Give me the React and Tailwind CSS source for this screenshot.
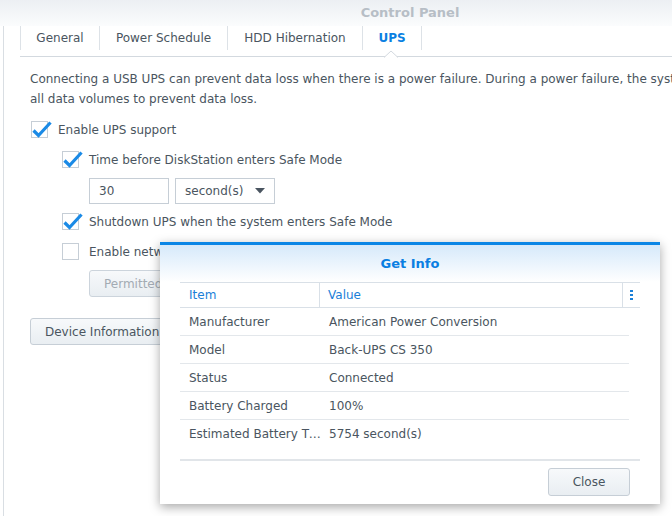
import React from "react";

function Check({ checked }) {
  return (
    <span className="relative block w-[17px] h-[17px] border border-[#c6ced6] bg-white shrink-0">
      {checked && (
        <svg className="absolute -left-[1px] -top-[4px]" width="22" height="22" viewBox="0 0 22 22">
          <path d="M2.5 12.5 L7.5 17.5 L19.5 4.5" fill="none" stroke="#1a8ae6" strokeWidth="3.2" strokeLinejoin="miter" />
        </svg>
      )}
    </span>
  );
}

function CheckRow({ checked, children, indent }) {
  return (
    <div className={`flex items-center h-[30px] ${indent ? "pl-[32px]" : "pl-[1px]"}`}>
      <Check checked={checked} />
      <span className="ml-[10px] pt-[1px] whitespace-nowrap">{children}</span>
    </div>
  );
}

const rows = [
  ["Manufacturer", "American Power Conversion"],
  ["Model", "Back-UPS CS 350"],
  ["Status", "Connected"],
  ["Battery Charged", "100%"],
  ["Estimated Battery Time", "5754 second(s)"],
];

export default function App() {
  return (
    <div className="relative w-[672px] h-[516px] overflow-hidden bg-white font-['DejaVu_Sans',sans-serif] text-[12px] text-[#4a5560]">
      {/* title bar */}
      <div className="h-[26px] w-[820px] bg-gradient-to-b from-[#eceff3] to-[#fbfcfd] flex items-center justify-center">
        <span className="font-bold text-[13px] text-[#b7bec6]">Control Panel</span>
      </div>

      <div className="ml-[3px] w-[814px] h-[490px] border-l border-[#d9dee3]">
        {/* tabs */}
        <div className="relative ml-[16px] h-[31px] border-b border-[#d3d9df] flex items-start">
          {[
            ["General", "w-[79px]"],
            ["Power Schedule", "w-[128px]"],
            ["HDD Hibernation", "w-[135px]"],
          ].map(([t, w]) => (
            <div key={t} className={`${w} h-[24px] border-l border-[#dde2e7] flex items-center justify-center whitespace-nowrap`}>
              {t}
            </div>
          ))}
          <div className="w-[60px] h-[24px] border-l border-r border-[#dde2e7] flex items-center justify-center font-bold text-[#0a7fe2]">
            UPS
          </div>
          <svg className="absolute left-[364px] top-[24px]" width="14" height="8" viewBox="0 0 14 8">
            <path d="M0 7.5 L7 1 L14 7.5" fill="white" stroke="#d3d9df" strokeWidth="1" />
            <rect x="1" y="7.2" width="12" height="1" fill="white" />
          </svg>
        </div>

        {/* content */}
        <div className="pl-[26px] pt-[12px]">
          <div className="leading-[20px] whitespace-nowrap">
            <div>Connecting a USB UPS can prevent data loss when there is a power failure. During a power failure, the system will unmount</div>
            <div>all data volumes to prevent data loss.</div>
          </div>

          <div className="mt-[5px]">
            <CheckRow checked>Enable UPS support</CheckRow>
            <CheckRow checked indent>Time before DiskStation enters Safe Mode</CheckRow>
            <div className="pl-[59px] mt-[4px] flex gap-[6px]">
              <div className="w-[80px] h-[26px] border border-[#c6ced6] flex items-center pl-[9px]">30</div>
              <div className="w-[100px] h-[26px] border border-[#c6ced6] flex items-center justify-between pl-[9px] pr-[9px]">
                <span>second(s)</span>
                <svg width="10" height="6" viewBox="0 0 10 6">
                  <path d="M0 0 L10 0 L5 5.5 Z" fill="#4a5560" />
                </svg>
              </div>
            </div>
            <div className="mt-[2px]">
              <CheckRow checked indent>Shutdown UPS when the system enters Safe Mode</CheckRow>
              <CheckRow indent>Enable network UPS server</CheckRow>
            </div>
            <div className="pl-[59px] mt-[4px]">
              <div className="inline-flex items-center h-[27px] px-[14px] rounded-[3px] border border-[#ccd4dc] bg-gradient-to-b from-[#f7f9fb] to-[#e9eef2] text-[#a3abb3] whitespace-nowrap">
                Permitted DiskStation Devices
              </div>
            </div>
            <div className="mt-[21px]">
              <div className="inline-flex items-center h-[27px] px-[14px] rounded-[3px] border border-[#c6ced6] bg-gradient-to-b from-[#f7f9fb] to-[#e9eef2] whitespace-nowrap">
                Device Information
              </div>
            </div>
          </div>
        </div>
      </div>

      {/* dialog */}
      <div className="absolute left-[160px] top-[242px] w-[500px] h-[262px] bg-white border-t-[3px] border-[#0b86e6] shadow-[0_3px_10px_rgba(0,0,0,0.35)] flex flex-col">
        <div className="h-[37px] shrink-0 bg-gradient-to-b from-[#d6e9fa] to-white flex items-center justify-center">
          <span className="font-bold text-[13px] text-[#0a7fe2]">Get Info</span>
        </div>
        <div className="mx-[20px]">
          <div className="flex h-[26px] border-t border-b border-[#d9e0e7] text-[#1a80d8]">
            <div className="w-[140px] border-r border-[#d9e0e7] flex items-center pl-[9px]">Item</div>
            <div className="flex-1 border-r border-[#d9e0e7] flex items-center pl-[8px]">Value</div>
            <div className="w-[17px] flex flex-col items-center justify-center gap-[1.5px]">
              <span className="block w-[2.5px] h-[2.5px] bg-[#1a80d8]" />
              <span className="block w-[2.5px] h-[2.5px] bg-[#1a80d8]" />
              <span className="block w-[2.5px] h-[2.5px] bg-[#1a80d8]" />
            </div>
          </div>
          <div className="w-[449px]">
            {rows.map(([k, v], i) => (
              <div key={k} className={`flex h-[28px] items-center ${i < rows.length - 1 ? "border-b border-[#e3e7eb]" : ""}`}>
                <div className="w-[140px] pl-[9px] shrink-0">
                  <div className="w-[134px] truncate">{k}</div>
                </div>
                <div className="pl-[9px] whitespace-nowrap">{v}</div>
              </div>
            ))}
          </div>
          <div className="mt-[11px] border-t-2 border-[#e1e5e9]" />
          <div className="flex justify-end pt-[7px] pr-[10px]">
            <div className="w-[82px] h-[28px] rounded-[3px] border border-[#c6ced6] bg-gradient-to-b from-[#f7f9fb] to-[#e9eef2] flex items-center justify-center">
              Close
            </div>
          </div>
        </div>
      </div>
    </div>
  );
}
